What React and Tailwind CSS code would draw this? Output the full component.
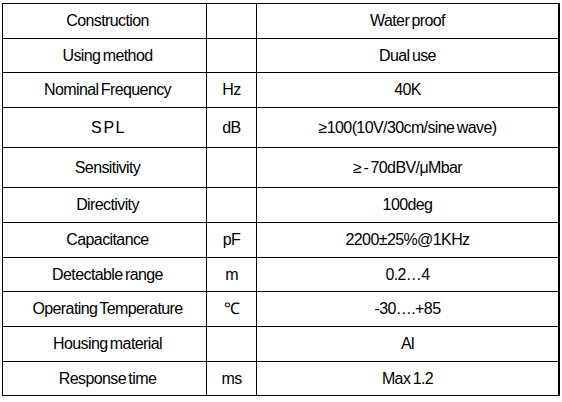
import React from "react";

const rows = [
  ["Construction", "", "Water proof", 35],
  ["Using method", "", "Dual use", 34],
  ["Nominal Frequency", "Hz", "40K", 35],
  ["S P L", "dB", "≥100(10V/30cm/sine wave)", 40],
  ["Sensitivity", "", "≥ - 70dBV/μMbar", 40],
  ["Directivity", "", "100deg", 35],
  ["Capacitance", "pF", "2200±25%@1KHz", 35],
  ["Detectable range", "m", "0.2…4", 34],
  ["Operating Temperature", "℃", "-30….+85", 35],
  ["Housing material", "", "Al", 35],
  ["Response time", "ms", "Max 1.2", 34],
];

const heights = {
  35: "h-[35px]",
  34: "h-[34px]",
  40: "h-[40px]",
};

export default function App() {
  return (
    <div className="w-[562px] h-[402px] bg-white pt-[3px] pl-[2px]">
      <div
        className="w-[558px] border-t border-l border-black text-black text-[16px] tracking-[-0.6px] [word-spacing:-1.5px]"
        style={{ fontFamily: '"Liberation Sans", Arial, sans-serif' }}
      >
        {rows.map(([a, b, c, h], i) => (
          <div
            key={i}
            className={`grid grid-cols-[204px_50px_1fr] ${heights[h]}`}
          >
            <div className="flex items-center justify-center border-r border-b border-black pl-[6px] whitespace-pre">
              {a}
            </div>
            <div className="flex items-center justify-center border-r border-b border-black">
              {b}
            </div>
            <div className="flex items-center justify-center border-r-2 border-b border-black whitespace-pre">
              {c}
            </div>
          </div>
        ))}
      </div>
    </div>
  );
}
